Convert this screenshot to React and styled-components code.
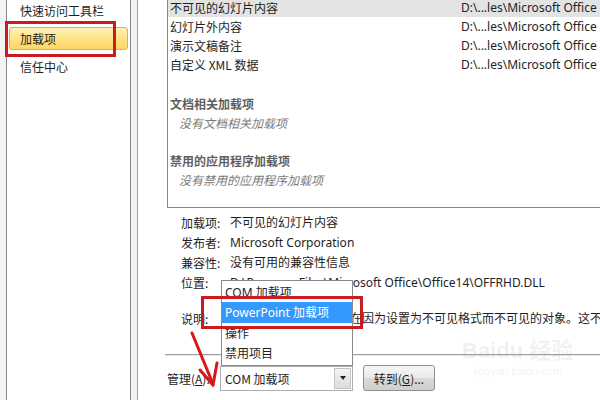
import React from 'react';
import styled, { createGlobalStyle } from 'styled-components';

const GlobalStyle = createGlobalStyle`
  html, body {
    margin: 0;
    padding: 0;
    background: #ffffff;
  }
  body {
    font-family: "Noto Sans CJK SC", "Noto Sans", sans-serif;
    font-size: 12px;
    color: #1e1e1e;
  }
`;

const Window = styled.div`
  width: 600px;
  height: 400px;
  display: flex;
  overflow: hidden;
  position: relative;
  background: #ffffff;
`;

const Sidebar = styled.div`
  position: relative;
  width: 131px;
  padding-left: 6px;
  background: #f3f3f3;
  border-right: 1px solid #a0a0a0;
  display: flex;
  flex-shrink: 0;
`;

const Nav = styled.div`
  flex: 1;
  background: #ffffff;
  border-left: 1px solid #828790;
  border-right: 1px solid #828790;
  margin-right: 6px;
  padding: 0 2px;
  display: flex;
  flex-direction: column;
`;

const NavItem = styled.div`
  height: ${(p) => (p.selected ? '23px' : '20px')};
  margin-top: ${(p) => p.gap || 0}px;
  display: flex;
  align-items: center;
  padding-left: 10px;
  box-sizing: border-box;
  border-radius: 3px;
  border: 1px solid ${(p) => (p.selected ? '#d6b253' : 'transparent')};
  background: ${(p) =>
    p.selected
      ? 'linear-gradient(to bottom, #fff1b8 0%, #ffe48c 45%, #fed764 100%)'
      : 'transparent'};
  white-space: nowrap;
`;

const NavMark = styled.div`
  position: absolute;
  left: 5px;
  top: 21px;
  width: 111px;
  height: 36px;
  box-sizing: border-box;
  border: 3px solid #cc1b1f;
`;

const Main = styled.div`
  flex: 1;
  display: flex;
  flex-direction: column;
  padding-left: 29px;
  min-width: 0;
`;

const ListBox = styled.div`
  height: 208px;
  box-sizing: border-box;
  border-left: 1px solid #828790;
  border-bottom: 1px solid #828790;
  margin-right: -40px;
  overflow: hidden;
  display: flex;
  flex-direction: column;
`;

const Rows = styled.div`
  margin-top: -2px;
  display: flex;
  flex-direction: column;
`;

const Row = styled.div`
  height: 19px;
  display: flex;
  align-items: center;
  padding-left: 2px;
  background: ${(p) => (p.active ? '#e3e3e3' : 'transparent')};
  white-space: nowrap;
`;

const NameCell = styled.span`
  width: 291px;
  flex-shrink: 0;
`;

const PathCell = styled.span`
  font-family: "Noto Sans", "Noto Sans CJK SC", sans-serif;
`;

const Group = styled.div`
  margin-top: ${(p) => p.gap}px;
  padding-left: 2px;
`;

const GroupTitle = styled.div`
  line-height: 19px;
  font-weight: 700;
  color: #5f5f5f;
`;

const GroupEmpty = styled.div`
  line-height: 19px;
  padding-left: 9px;
  font-style: italic;
  color: #7a7a7a;
`;

const Details = styled.div`
  margin-top: 4px;
  padding-left: 14px;
  display: flex;
  flex-direction: column;
`;

const DetailRow = styled.div`
  height: 20px;
  margin-top: ${(p) => p.gap || 0}px;
  display: flex;
  align-items: center;
  white-space: nowrap;
`;

const Label = styled.span`
  width: 49px;
  flex-shrink: 0;
`;

const Value = styled.span`
  font-family: "Noto Sans", "Noto Sans CJK SC", sans-serif;
`;

const Separator = styled.div`
  margin-top: 26px;
  margin-left: -2px;
  height: 0;
  border-top: 1px solid #a0a0a0;
  border-bottom: 1px solid #e8e8e8;
`;

const Footer = styled.div`
  margin-top: 9px;
  display: flex;
  align-items: center;
  white-space: nowrap;
`;

const FooterLabel = styled.span`
  width: 53px;
  flex-shrink: 0;
  & u {
    text-decoration: underline;
  }
`;

const Combo = styled.div`
  position: relative;
  width: 133px;
  height: 25px;
  box-sizing: border-box;
  border: 1px solid #abadb3;
  background: #ffffff;
  display: flex;
  align-items: center;
  padding-left: 4px;
`;

const ComboText = styled.span`
  flex: 1;
`;

const ComboArrow = styled.div`
  width: 17px;
  height: 21px;
  margin-right: 1px;
  box-sizing: border-box;
  border: 1px solid #c4c4c4;
  background: linear-gradient(to bottom, #f4f4f4, #dcdcdc);
  display: flex;
  align-items: center;
  justify-content: center;
  &::after {
    content: '';
    border-left: 3.5px solid transparent;
    border-right: 3.5px solid transparent;
    border-top: 4px solid #222;
  }
`;

const DropList = styled.div`
  position: absolute;
  left: 0;
  bottom: 100%;
  margin-bottom: 1px;
  width: 132px;
  box-sizing: border-box;
  background: #ffffff;
  border: 1px solid #8a8a8a;
  padding: 1px 0 1px;
  display: flex;
  flex-direction: column;
  z-index: 2;
`;

const DropItem = styled.div`
  height: 20.5px;
  display: flex;
  align-items: center;
  padding-left: 3px;
  background: ${(p) => (p.active ? '#3399ff' : 'transparent')};
  color: ${(p) => (p.active ? '#ffffff' : '#1e1e1e')};
  font-family: "Noto Sans", "Noto Sans CJK SC", sans-serif;
`;

const DropMark = styled.div`
  position: absolute;
  left: -21px;
  top: 15px;
  width: 162px;
  height: 33px;
  box-sizing: border-box;
  border: 3px solid #cc1b1f;
`;

const Button = styled.button`
  margin-left: 10px;
  width: 72px;
  height: 26px;
  border: 1px solid #8e8f8f;
  border-radius: 3px;
  background: linear-gradient(to bottom, #f6f6f6 0%, #e9e9e9 50%, #d9d9d9 51%, #cfcfcf 100%);
  font-family: "Noto Sans CJK SC", "Noto Sans", sans-serif;
  font-size: 12px;
  color: #1e1e1e;
  padding: 0;
  & u {
    text-decoration: underline;
  }
`;

const Arrow = styled.svg`
  position: absolute;
  left: 182px;
  top: 327px;
  width: 45px;
  height: 65px;
`;

const Watermark = styled.div`
  position: absolute;
  left: 462px;
  top: 338px;
  display: flex;
  flex-direction: column;
  align-items: center;
  white-space: nowrap;
  color: rgba(140, 140, 140, 0.12);
  font-family: "Liberation Sans", "Noto Sans CJK SC", sans-serif;
  pointer-events: none;
`;

const WatermarkLogo = styled.span`
  font-size: 22px;
  font-weight: 700;
  line-height: 26px;
`;

const WatermarkUrl = styled.span`
  font-size: 11px;
  line-height: 14px;
`;

const addins = [
  '不可见的幻灯片内容',
  '幻灯片外内容',
  '演示文稿备注',
  '自定义 XML 数据',
];

const options = ['COM 加载项', 'PowerPoint 加载项', '操作', '禁用项目'];

export default function App() {
  return (
    <>
      <GlobalStyle />
      <Window>
        <Sidebar>
          <Nav>
            <NavItem>快速访问工具栏</NavItem>
            <NavItem selected gap={7}>加载项</NavItem>
            <NavItem gap={6}>信任中心</NavItem>
          </Nav>
          <NavMark />
        </Sidebar>
        <Main>
          <ListBox>
            <Rows>
              {addins.map((name, i) => (
                <Row key={name} active={i === 0}>
                  <NameCell>{name}</NameCell>
                  <PathCell>D:\...les\Microsoft Office</PathCell>
                </Row>
              ))}
            </Rows>
            <Group gap={20}>
              <GroupTitle>文档相关加载项</GroupTitle>
              <GroupEmpty>没有文档相关加载项</GroupEmpty>
            </Group>
            <Group gap={19}>
              <GroupTitle>禁用的应用程序加载项</GroupTitle>
              <GroupEmpty>没有禁用的应用程序加载项</GroupEmpty>
            </Group>
          </ListBox>
          <Details>
            <DetailRow>
              <Label>加载项:</Label>
              <Value>不可见的幻灯片内容</Value>
            </DetailRow>
            <DetailRow>
              <Label>发布者:</Label>
              <Value>Microsoft Corporation</Value>
            </DetailRow>
            <DetailRow>
              <Label>兼容性:</Label>
              <Value>没有可用的兼容性信息</Value>
            </DetailRow>
            <DetailRow>
              <Label>位置:</Label>
              <Value>D:\Program Files\Microsoft Office\Office14\OFFRHD.DLL</Value>
            </DetailRow>
            <DetailRow gap={16}>
              <Label>说明:</Label>
              <Value>检查演示文稿中是否存在因为设置为不可见格式而不可见的对象。这不</Value>
            </DetailRow>
          </Details>
          <Separator />
          <Footer>
            <FooterLabel>
              管理(<u>A</u>):
            </FooterLabel>
            <Combo>
              <ComboText>COM 加载项</ComboText>
              <ComboArrow />
              <DropList>
                {options.map((o, i) => (
                  <DropItem key={o} active={i === 1}>
                    {o}
                  </DropItem>
                ))}
                <DropMark />
              </DropList>
            </Combo>
            <Button>
              转到(<u>G</u>)...
            </Button>
          </Footer>
        </Main>
        <Watermark>
          <WatermarkLogo>Baidu 经验</WatermarkLogo>
          <WatermarkUrl>jingyan.baidu.com</WatermarkUrl>
        </Watermark>
        <Arrow viewBox="0 0 45 65">
          <g stroke="#d8161b" strokeWidth="3" strokeLinecap="round" fill="none">
            <line x1="10" y1="6" x2="31" y2="57" />
            <line x1="31" y1="58" x2="18" y2="43" />
            <line x1="31" y1="58" x2="35" y2="36" />
          </g>
        </Arrow>
      </Window>
    </>
  );
}
